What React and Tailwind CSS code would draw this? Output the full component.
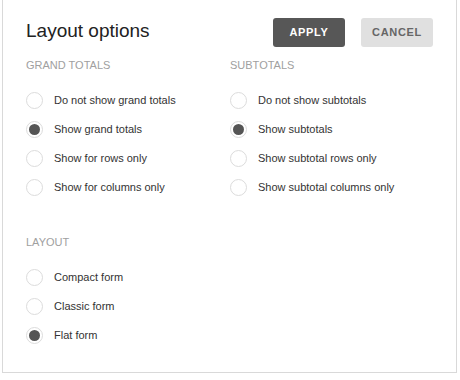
const grandTotals = [
  { label: 'Do not show grand totals' },
  { label: 'Show grand totals', checked: true },
  { label: 'Show for rows only' },
  { label: 'Show for columns only' },
];

const subtotals = [
  { label: 'Do not show subtotals' },
  { label: 'Show subtotals', checked: true },
  { label: 'Show subtotal rows only' },
  { label: 'Show subtotal columns only' },
];

const layouts = [
  { label: 'Compact form' },
  { label: 'Classic form' },
  { label: 'Flat form', checked: true },
];

function Radio({ label, checked }) {
  return (
    <div className="flex items-center h-[29px]">
      <span className="w-[17px] h-[17px] rounded-full border border-[#dcdcdc] bg-white flex items-center justify-center shrink-0">
        {checked && <span className="w-[11px] h-[11px] rounded-full bg-[#555]" />}
      </span>
      <span className="ml-[11px] text-[11px] text-[#333] whitespace-nowrap">{label}</span>
    </div>
  );
}

function Section({ title, items }) {
  return (
    <div>
      <p className="m-0 h-[14px] leading-[14px] text-[11px] uppercase text-[#a0a0a0]">{title}</p>
      <div className="mt-[14px] flex flex-col">
        {items.map((it) => (
          <Radio key={it.label} {...it} />
        ))}
      </div>
    </div>
  );
}

export default function App() {
  return (
    <div className="w-[460px] h-[380px] bg-white overflow-hidden font-['Liberation_Sans',Arial,sans-serif]">
      <div className="ml-[2px] w-[455px] h-[373px] bg-white border-l border-r border-b border-[#d9d9d9] pl-[23px] pr-[23px]">
        {/* Header */}
        <div className="flex items-start justify-between pt-[18px]">
          <h1 className="m-0 mt-[1px] text-[19px] leading-[24px] font-normal text-[#222]">Layout options</h1>
          <div className="flex gap-[16px]">
            <button className="w-[72px] h-[29px] rounded-[3px] bg-[#575757] text-white text-[11px] font-bold tracking-[0.06em]">
              APPLY
            </button>
            <button className="w-[72px] h-[29px] rounded-[3px] bg-[#e0e0e0] text-[#666] text-[11px] font-bold tracking-[0.06em]">
              CANCEL
            </button>
          </div>
        </div>

        {/* Totals */}
        <div className="grid grid-cols-[204px_1fr] mt-[11px]">
          <Section title="Grand totals" items={grandTotals} />
          <Section title="Subtotals" items={subtotals} />
        </div>

        {/* Layout */}
        <div className="mt-[33px]">
          <Section title="Layout" items={layouts} />
        </div>
      </div>
    </div>
  );
}
